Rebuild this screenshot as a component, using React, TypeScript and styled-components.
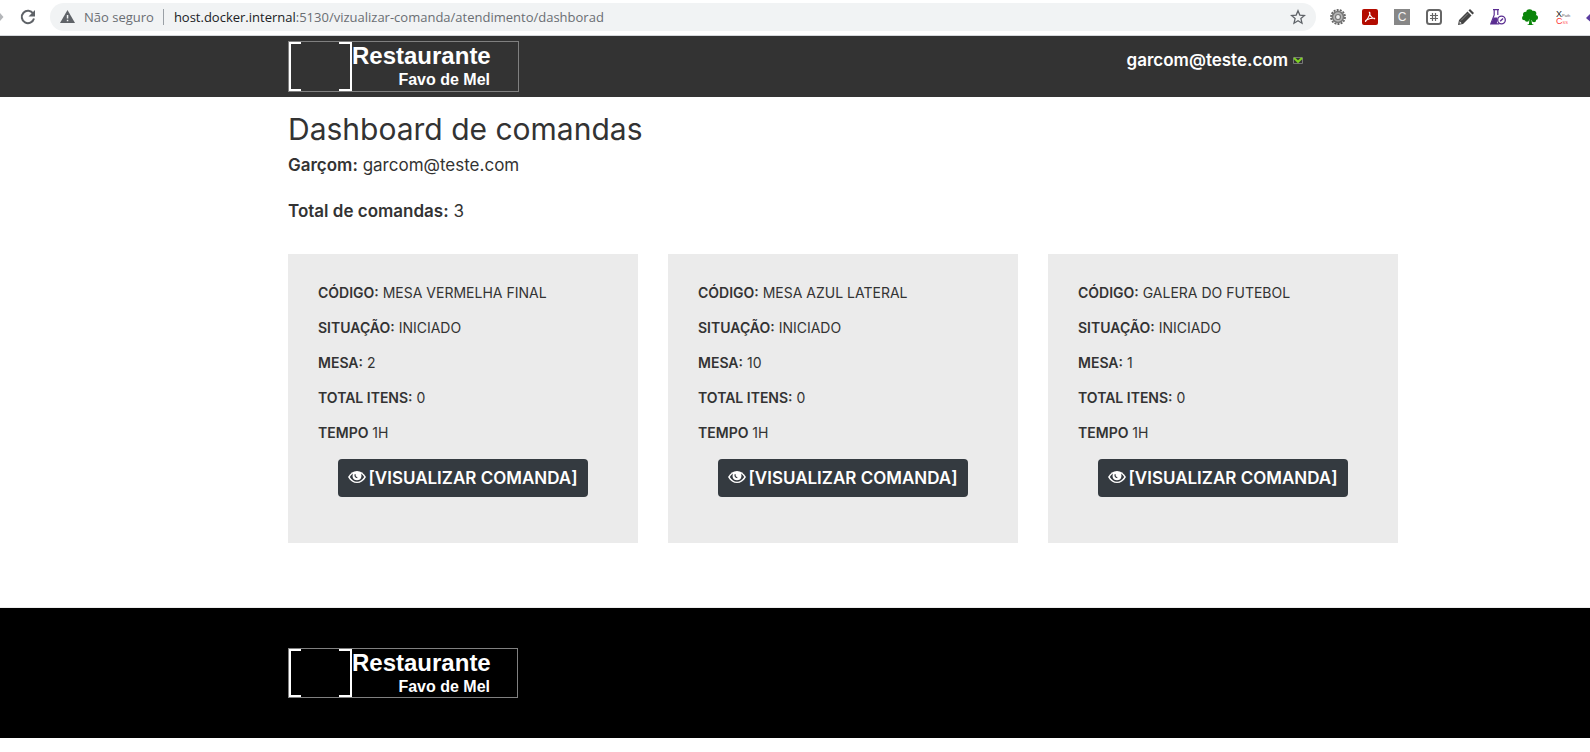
import React from "react";
import styled, { createGlobalStyle } from "styled-components";

const GlobalStyle = createGlobalStyle`
  *, *::before, *::after { box-sizing: border-box; }
  body {
    margin: 0;
    background: #fff;
    color: #333;
    font-family: Inter, "Open Sans", sans-serif;
    font-size: 16px;
    line-height: 24px;
    overflow-x: hidden;
  }
`;

/* ---------- browser toolbar ---------- */

const Toolbar = styled.div`
  display: flex;
  align-items: center;
  height: 36px;
  padding-bottom: 2px;
  border-bottom: 1px solid #d5d8dc;
  overflow: hidden;
  font-family: "Open Sans", "Noto Sans", sans-serif;
  font-size: 13px;
  line-height: 20px;
`;

const IconButton = styled.button`
  display: flex;
  flex: none;
  align-items: center;
  justify-content: center;
  width: 16px;
  height: 16px;
  padding: 0;
  border: 0;
  background: none;
  color: #5f6368;
`;

const ForwardButton = styled(IconButton)`
  width: 4px;
  color: #b4b6b9;
`;

const ReloadButton = styled(IconButton)`
  margin: 0 14px 0 16px;
`;

const AddressBar = styled.div`
  display: flex;
  flex: 1;
  align-items: center;
  min-width: 0;
  height: 28px;
  padding: 0 10px;
  border-radius: 14px;
  background: #f1f3f4;
  color: #6a6e73;
`;

const Security = styled.span`
  margin: 0 9px;
  white-space: nowrap;
`;

const Divider = styled.span`
  width: 1px;
  height: 16px;
  margin-right: 10px;
  background: #9aa0a6;
`;

const Host = styled.label`
  color: #202124;
`;

const PathInput = styled.input`
  flex: 1;
  min-width: 0;
  padding: 0;
  border: 0;
  outline: 0;
  background: transparent;
  color: inherit;
  font: inherit;
`;

const Extensions = styled.div`
  display: flex;
  flex: none;
  gap: 16px;
  width: 260px;
  margin-left: 14px;
  overflow: hidden;
`;

const LetterBadge = styled.span`
  width: 16px;
  height: 16px;
  background: #878787;
  color: #f4f4f4;
  font: 12px/16px "Liberation Sans", sans-serif;
  text-align: center;
`;

const XpathBadge = styled.span`
  display: flex;
  flex-direction: column;
  width: 12px;
  font: 9px/8px "Liberation Sans", sans-serif;
`;

const TinyText = styled.small<{ $tone: string }>`
  color: ${(p) => p.$tone};
  font-size: 4px;
`;

const XpathLine = styled.span<{ $tone: string }>`
  display: flex;
  align-items: baseline;
  height: 7px;
  color: ${(p) => p.$tone};
`;

/* ---------- page ---------- */

const Container = styled.div`
  width: calc(100% - 30px);
  max-width: 1110px;
  margin-left: max(15px, calc(50% - 507px));
`;

const Header = styled.header`
  background: #333;
`;

const HeaderRow = styled(Container)`
  display: flex;
  justify-content: space-between;
  padding: 5px 95px 5px 0;
`;

const LogoLink = styled.a<{ $height: number }>`
  display: flex;
  width: ${(p) => p.$height + 180}px;
  height: ${(p) => p.$height}px;
  border: 1px solid #808080;
  color: #fff;
  font-family: "Liberation Sans", sans-serif;
  font-weight: 700;
  text-decoration: none;
`;

const LogoText = styled.span`
  display: flex;
  flex-direction: column;
  width: 141px;
`;

const LogoName = styled.span`
  font-size: 24px;
  line-height: 28px;
`;

const LogoTagline = styled.span`
  padding-right: 3px;
  font-size: 16px;
  line-height: 20px;
  text-align: right;
`;

const UserButton = styled.button`
  display: flex;
  align-items: center;
  gap: 5px;
  height: 24px;
  margin-top: 7px;
  padding: 0;
  border: 0;
  background: none;
  color: #fff;
  font: 600 17px/24px Inter, sans-serif;
`;

const Title = styled.h1`
  margin: 0;
  padding-top: 15px;
  font-size: 30px;
  font-weight: 400;
  line-height: 34px;
`;

const Info = styled.p`
  margin: 0 0 22px;
  font-size: 17px;
  line-height: 24px;
`;

const Summary = styled.div`
  padding-top: 7px;
`;

const Strong = styled.strong`
  font-weight: 600;
`;

const Cards = styled.div`
  display: grid;
  grid-template-columns: repeat(auto-fit, minmax(300px, 1fr));
  gap: 30px;
  padding: 9px 0 64px;
`;

const Card = styled.article`
  padding: 21px 30px 46px;
  background: #ebebeb;
`;

const Field = styled.p`
  margin: 0;
  font-size: 14px;
  line-height: 35px;
  text-transform: uppercase;
`;

const ViewButton = styled.button`
  display: flex;
  align-items: center;
  justify-content: center;
  gap: 2px;
  width: 250px;
  height: 38px;
  margin: 9px 20px 0;
  padding: 0;
  border: 0;
  border-radius: 4px;
  background: #343a40;
  color: #fff;
  font: 600 17px/24px Inter, sans-serif;
  text-transform: uppercase;
  white-space: nowrap;
`;

const Footer = styled.footer`
  padding: 40px 0;
  border-top: 1px solid #eee;
  background: #000;
  background-clip: padding-box;
`;

/* ---------- drawings ---------- */

const Brackets = () => (
  <svg width="63" height="100%" viewBox="0 0 63 49" preserveAspectRatio="none" fill="none" stroke="#fff" strokeWidth="2" aria-hidden="true">
    <path d="M12 1H1v47h11M50 1h12v47H50" />
  </svg>
);

const Logo = ({ height }: { height: number }) => (
  <LogoLink href="#" $height={height}>
    <Brackets />
    <LogoText>
      <LogoName>Restaurante</LogoName>
      <LogoTagline>Favo de Mel</LogoTagline>
    </LogoText>
  </LogoLink>
);

const EyeIcon = () => (
  <svg width="18" height="16" viewBox="0 0 18 16" aria-hidden="true">
    <path d="M0 7C2.300 3 5.400 1 9 1s6.700 2 9 6c-2.300 4-5.400 6-9 6s-6.700-2-9-6Z" fill="#fff" />
    <path d="M1.800 7C2.600 5.500 3.700 4.400 5 3.600 3.800 7 5 10.300 9 10.300S14.200 7 13 3.600c1.300.8 2.400 1.900 3.200 3.400-1.900 3.200-4.300 4.700-7.200 4.700S3.700 10.200 1.800 7Z" fill="#343a40" />
    <path d="M7.300 4.300c-.7 1.700.1 3.200 2 3.300" fill="none" stroke="#343a40" strokeWidth="1.200" />
  </svg>
);

const CaretIcon = () => (
  <svg width="10" height="7" viewBox="0 0 10 7" fill="none" aria-hidden="true">
    <path d="M.5.5h9v6h-9z" stroke="#777" />
    <path d="M1 1l4 3.800L9 1" stroke="#7ed321" strokeWidth="2" />
  </svg>
);

const ReloadIcon = () => (
  <svg width="16" height="16" viewBox="0 0 16 16" aria-hidden="true">
    <path d="M13.200 4.600A6.200 6.200 0 1 0 14 9.600" fill="none" stroke="#5f6368" strokeWidth="2" />
    <path d="M15 1v6.500H8.500Z" fill="#5f6368" />
  </svg>
);

const WarningIcon = () => (
  <svg width="15" height="13" viewBox="0 0 15 13" aria-hidden="true">
    <path d="M7.500 0 15 13H0Z" fill="#5f6368" />
    <path d="M6.800 5h1.500v3.500H6.800zM6.800 9.700h1.500v1.500H6.800z" fill="#f1f3f4" />
  </svg>
);

const StarIcon = () => (
  <svg width="16" height="16" viewBox="0 0 16 16" fill="none" stroke="#5f6368" strokeWidth="1.300" aria-hidden="true">
    <path d="m8 1.800 1.800 4.300 4.700.4-3.600 3.100 1.100 4.600L8 11.800l-4 2.400 1.100-4.600L1.500 6.500l4.700-.4Z" />
  </svg>
);

const GearIcon = () => (
  <svg width="16" height="16" viewBox="0 0 16 16" fill="none" aria-hidden="true">
    <circle cx="8" cy="8" r="7" stroke="#666" strokeWidth="1.800" strokeDasharray="2 1.140" />
    <circle cx="8" cy="8" r="5.500" fill="#b5b5b5" stroke="#777" strokeWidth="1.500" />
    <circle cx="8" cy="8" r="2.500" fill="#eee" stroke="#777" strokeWidth="1.200" />
  </svg>
);

const PdfIcon = () => (
  <svg width="16" height="16" viewBox="0 0 16 16" fill="none" aria-hidden="true">
    <rect width="16" height="16" rx="2" fill="#b30b00" />
    <path d="M7.300 3.200c1.500 0 .4 4.200-3.700 9.200-1.200-.6 3.500-3.600 9-3 .8 1.200-4.800-.4-5.300-6.200Z" stroke="#fff" strokeWidth="1.100" />
  </svg>
);

const HashIcon = () => (
  <svg width="16" height="16" viewBox="0 0 16 16" fill="none" stroke="#666" aria-hidden="true">
    <rect x="1" y="1" width="14" height="14" rx="2.500" strokeWidth="2" />
    <path d="M6.500 4v8M9.500 4v8M4 6.500h8M4 9.500h8" strokeWidth="1.200" />
  </svg>
);

const PencilIcon = () => (
  <svg width="16" height="16" viewBox="0 0 16 16" fill="#444" aria-hidden="true">
    <path d="m0 16 1-5L9.500 2.500l4 4L5 15ZM10.500 1.500 12 0l4 4-1.500 1.500Z" />
    <path d="m3 11.500 7-7" stroke="#999" strokeWidth=".8" />
    <path d="m1.600 12.300 2 2-2 .5Z" fill="#fff" />
  </svg>
);

const FlaskIcon = () => (
  <svg width="16" height="16" viewBox="0 0 16 16" fill="none" stroke="#5a2d91" aria-hidden="true">
    <path d="M3 .7h6M4.200 1v5L.8 14.800h8.500M7.800 1v5" strokeWidth="1.200" />
    <path d="M3.500 8.500h4L6.800 15H1Z" fill="#5a2d91" stroke="none" />
    <circle cx="11.500" cy="11" r="3.800" fill="#fff" strokeWidth="1.300" />
    <path d="m10.200 12.300 2.800-2.800" strokeWidth="1.400" />
  </svg>
);

const TreeIcon = () => (
  <svg width="16" height="16" viewBox="0 0 16 16" fill="#0a850a" aria-hidden="true">
    <circle cx="7.500" cy="3.500" r="3.300" />
    <circle cx="3.800" cy="5.500" r="2.800" />
    <circle cx="11.500" cy="4.500" r="2.800" />
    <circle cx="2.300" cy="9" r="2.300" />
    <circle cx="13.500" cy="8.500" r="2.500" />
    <circle cx="5" cy="10.500" r="2.200" />
    <circle cx="12" cy="11" r="2.200" />
    <path d="M4 6h9v5H9.500l.5 4 2 1H5l2-1 .3-5H4Z" />
  </svg>
);

const DiamondIcon = () => (
  <svg width="16" height="16" viewBox="0 0 16 16" aria-hidden="true">
    <path d="m0 9 8-8 8 8-8 7Z" fill="#5a3da0" />
  </svg>
);

/* ---------- data ---------- */

type Order = { code: string; status: string; table: number; items: number; time: string };

const orders: Order[] = [
  { code: "Mesa vermelha final", status: "Iniciado", table: 2, items: 0, time: "1h" },
  { code: "Mesa azul lateral", status: "Iniciado", table: 10, items: 0, time: "1h" },
  { code: "Galera do futebol", status: "Iniciado", table: 1, items: 0, time: "1h" },
];

const OrderCard = ({ order }: { order: Order }) => (
  <Card>
    <Field><Strong>Código:</Strong> {order.code}</Field>
    <Field><Strong>Situação:</Strong> {order.status}</Field>
    <Field><Strong>Mesa:</Strong> {order.table}</Field>
    <Field><Strong>Total itens:</Strong> {order.items}</Field>
    <Field><Strong>Tempo</Strong> {order.time}</Field>
    <ViewButton type="button">
      <EyeIcon />
      [Visualizar comanda]
    </ViewButton>
  </Card>
);

const BrowserBar = () => (
  <Toolbar>
    <ForwardButton type="button" aria-label="Avançar">
      <svg width="4" height="8" viewBox="0 0 4 8" aria-hidden="true"><path d="M0 0l3.500 4L0 8Z" fill="currentColor" /></svg>
    </ForwardButton>
    <ReloadButton type="button" aria-label="Recarregar"><ReloadIcon /></ReloadButton>
    <AddressBar>
      <WarningIcon />
      <Security>Não seguro</Security>
      <Divider />
      <Host htmlFor="address">host.docker.internal</Host>
      <PathInput id="address" type="text" defaultValue=":5130/vizualizar-comanda/atendimento/dashborad" />
      <IconButton type="button" aria-label="Favoritar"><StarIcon /></IconButton>
    </AddressBar>
    <Extensions>
      <IconButton type="button" aria-label="Configurações"><GearIcon /></IconButton>
      <IconButton type="button" aria-label="PDF"><PdfIcon /></IconButton>
      <IconButton type="button"><LetterBadge>C</LetterBadge></IconButton>
      <IconButton type="button" aria-label="Grade"><HashIcon /></IconButton>
      <IconButton type="button" aria-label="Editar"><PencilIcon /></IconButton>
      <IconButton type="button" aria-label="Testes"><FlaskIcon /></IconButton>
      <IconButton type="button" aria-label="Árvore"><TreeIcon /></IconButton>
      <IconButton type="button">
        <XpathBadge>
          <XpathLine $tone="#222">X<TinyText $tone="#555">Path</TinyText></XpathLine>
          <XpathLine $tone="#f33">C<TinyText $tone="#f55">SS</TinyText></XpathLine>
        </XpathBadge>
      </IconButton>
      <IconButton type="button" aria-label="Extensão"><DiamondIcon /></IconButton>
    </Extensions>
  </Toolbar>
);

export default function App() {
  return (
    <>
      <GlobalStyle />
      <BrowserBar />
      <Header>
        <HeaderRow>
          <Logo height={51} />
          <UserButton type="button">
            garcom@teste.com
            <CaretIcon />
          </UserButton>
        </HeaderRow>
      </Header>
      <main>
        <Container>
          <Title>Dashboard de comandas</Title>
          <Summary>
            <Info><Strong>Garçom:</Strong> garcom@teste.com</Info>
            <Info><Strong>Total de comandas:</Strong> 3</Info>
          </Summary>
          <Cards>
            {orders.map((order) => <OrderCard key={order.code} order={order} />)}
          </Cards>
        </Container>
      </main>
      <Footer>
        <Container><Logo height={50} /></Container>
      </Footer>
    </>
  );
}
